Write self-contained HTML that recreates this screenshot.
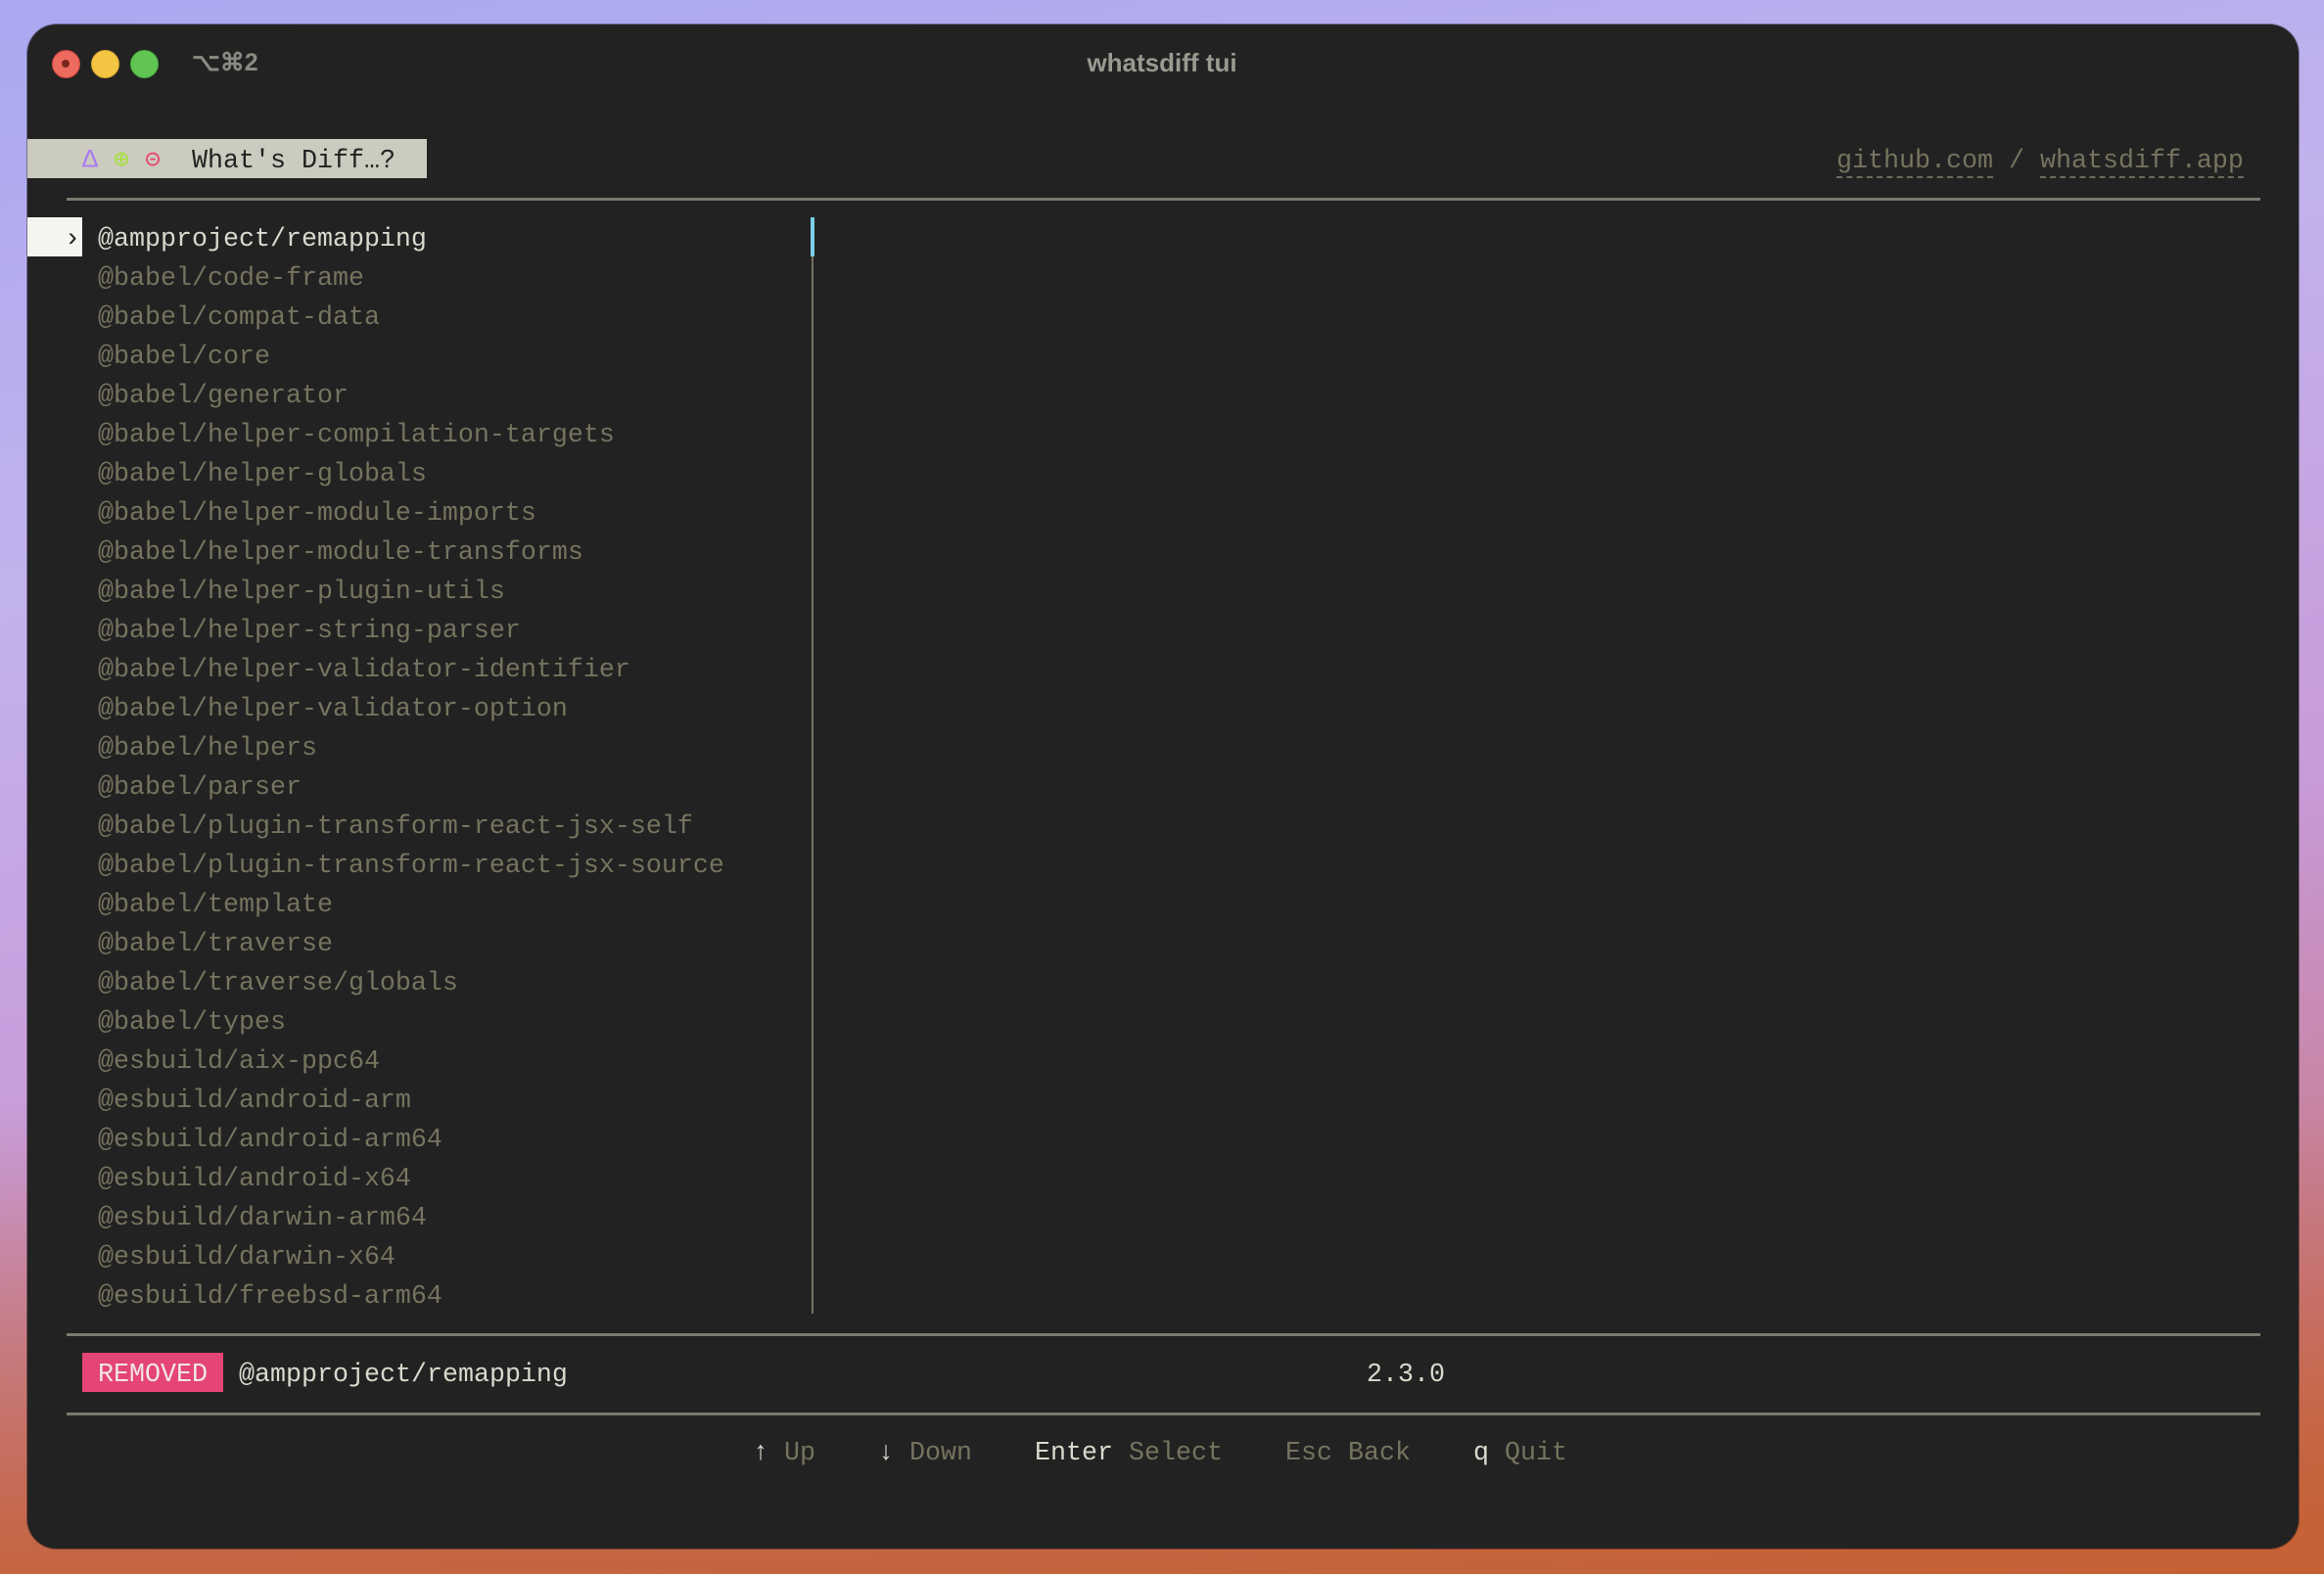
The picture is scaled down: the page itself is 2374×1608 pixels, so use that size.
<!DOCTYPE html>
<html><head><meta charset="utf-8"><style>
html,body{margin:0;padding:0;width:2374px;height:1608px;overflow:hidden}
body{background:
 linear-gradient(0deg,rgba(196,96,50,.85) 0%,rgba(196,96,50,0) 30%),
 linear-gradient(170deg,#a9a8f0 0%,#c2b2ec 30%,#c89ad8 60%,#c77a8a 85%,#c8643c 100%);position:relative;font-family:"Liberation Mono",monospace}
.win{position:absolute;left:28px;top:25px;width:2320px;height:1557px;background:#222222;border-radius:30px;box-shadow:0 0 0 1px rgba(0,0,0,.35)}
.dot{position:absolute;top:51px;width:27px;height:27px;border-radius:50%}
.t{position:absolute;white-space:pre;font-size:26.67px;line-height:40px;height:40px;padding-top:3px}
.g{color:#76735f}
.w{color:#d9d9cd}
.hr{position:absolute;left:68px;width:2241px;height:3px;background:#7a7a70}
</style></head><body>
<div class="win"></div>
<div class="dot" style="left:53px;background:#ed6a5e;border:1px solid #d0463c"></div>
<div style="position:absolute;left:63px;top:61px;width:8px;height:8px;border-radius:50%;background:#7a2620"></div>
<div class="dot" style="left:93px;background:#f4c542;border:1px solid #d6a630"></div>
<div class="dot" style="left:133px;background:#61c554;border:1px solid #45a83b"></div>
<div style="position:absolute;left:196px;top:49px;font:bold 25px 'Liberation Sans',sans-serif;color:#8a8a82">⌥⌘2</div>
<div style="position:absolute;left:0;width:2374px;text-align:center;top:49px;font:bold 26px 'Liberation Sans',sans-serif;color:#9a9a90">whatsdiff tui</div>

<div style="position:absolute;left:28px;top:142px;width:408px;height:40px;background:#cbcbbf"></div>
<div class="t" style="left:84px;top:142px;color:#a97cf0">Δ</div>
<div class="t" style="left:116px;top:142px;color:#a8e040">⊕</div>
<div class="t" style="left:148px;top:142px;color:#e8466f">⊝</div>
<div class="t" style="left:196px;top:142px;color:#222">What's Diff…?</div>

<div class="t g" style="left:1876px;top:142px"><span style="border-bottom:2px dashed #6a6a5c">github.com</span> / <span style="border-bottom:2px dashed #6a6a5c">whatsdiff.app</span></div>

<div class="hr" style="top:202px"></div>

<div style="position:absolute;left:28px;top:222px;width:56px;height:40px;background:#f5f5ef"></div>
<div class="t" style="left:66px;top:222px;color:#222">›</div>
<div style="position:absolute;left:828px;top:222px;width:4px;height:40px;background:#7ad0e6"></div>
<div style="position:absolute;left:829px;top:262px;width:2px;height:1080px;background:#76735f"></div>

<div class="t w" style="left:100px;top:222px">@ampproject/remapping</div>
<div class="t g" style="left:100px;top:262px;height:auto">@babel/code-frame
@babel/compat-data
@babel/core
@babel/generator
@babel/helper-compilation-targets
@babel/helper-globals
@babel/helper-module-imports
@babel/helper-module-transforms
@babel/helper-plugin-utils
@babel/helper-string-parser
@babel/helper-validator-identifier
@babel/helper-validator-option
@babel/helpers
@babel/parser
@babel/plugin-transform-react-jsx-self
@babel/plugin-transform-react-jsx-source
@babel/template
@babel/traverse
@babel/traverse/globals
@babel/types
@esbuild/aix-ppc64
@esbuild/android-arm
@esbuild/android-arm64
@esbuild/android-x64
@esbuild/darwin-arm64
@esbuild/darwin-x64
@esbuild/freebsd-arm64</div>

<div class="hr" style="top:1362px"></div>
<div style="position:absolute;left:84px;top:1382px;width:144px;height:40px;background:#e54477"></div>
<div class="t" style="left:100px;top:1382px;color:#f0e6e8">REMOVED</div>
<div class="t w" style="left:244px;top:1382px">@ampproject/remapping</div>
<div class="t w" style="left:1396px;top:1382px">2.3.0</div>
<div class="hr" style="top:1443px"></div>

<div class="t" style="left:769px;top:1462px"><span class="w">↑</span> <span class="g">Up</span>    <span class="w">↓</span> <span class="g">Down</span>    <span class="w">Enter</span> <span class="g">Select</span>    <span class="g">Esc</span> <span class="g">Back</span>    <span class="w">q</span> <span class="g">Quit</span></div>
</body></html>
